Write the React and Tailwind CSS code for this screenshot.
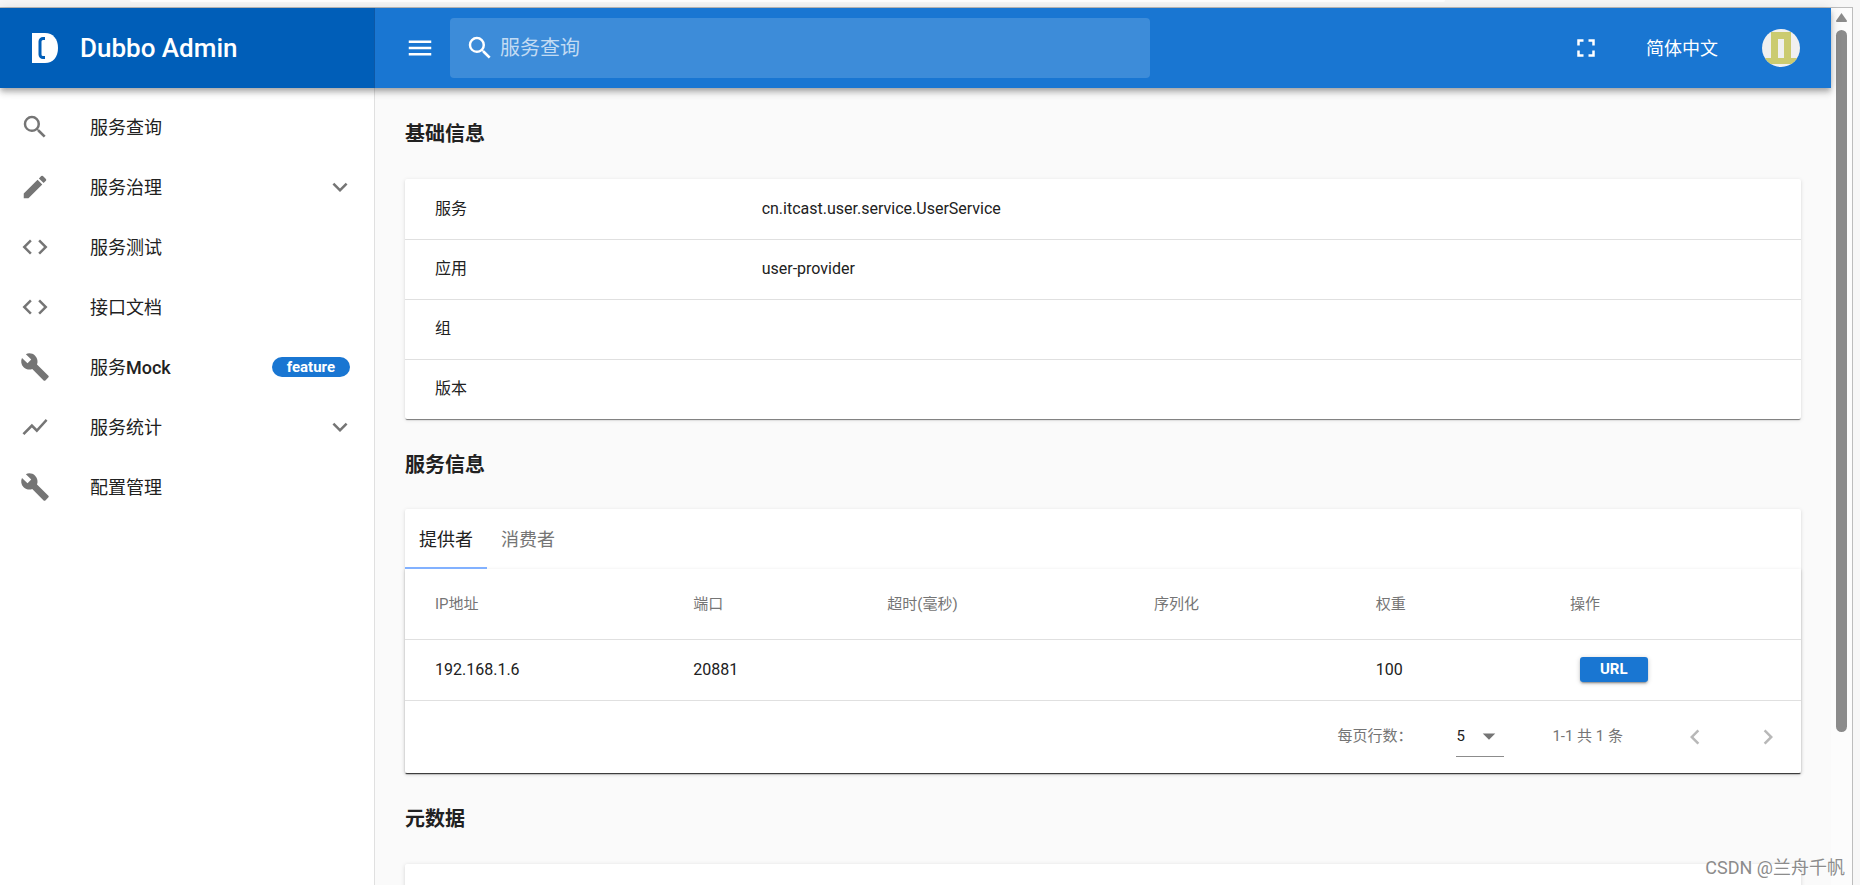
import React, { useState } from 'react';
import {
  MdBuild,
  MdChevronLeft,
  MdChevronRight,
  MdCode,
  MdEdit,
  MdFullscreen,
  MdKeyboardArrowDown,
  MdMenu,
  MdSearch,
  MdShowChart,
  MdArrowDropDown,
} from 'react-icons/md';

const menuItems = [
  { title: '服务查询', icon: MdSearch },
  { title: '服务治理', icon: MdEdit, group: true },
  { title: '服务测试', icon: MdCode },
  { title: '接口文档', icon: MdCode },
  { title: '服务', suffix: 'Mock', icon: MdBuild, badge: 'feature' },
  { title: '服务统计', icon: MdShowChart, group: true },
  { title: '配置管理', icon: MdBuild },
];

const basicInfo = [
  { name: '服务', value: 'cn.itcast.user.service.UserService' },
  { name: '应用', value: 'user-provider' },
  { name: '组', value: '' },
  { name: '版本', value: '' },
];

const columns = [
  { title: 'IP地址', width: 'w-[18.5%]' },
  { title: '端口', width: 'w-[13.9%]' },
  { title: '超时(毫秒)', width: 'w-[19.1%]' },
  { title: '序列化', width: 'w-[15.9%]' },
  { title: '权重', width: 'w-[13.9%]' },
  { title: '操作', width: 'w-[18.7%]' },
];

const providers = [
  { ip: '192.168.1.6', port: '20881', timeout: '', serialization: '', weight: '100' },
];

const Logo = () => (
  <svg className="w-[26px] h-[30px]" viewBox="0 0 26 30" fill="none">
    <path d="M0 0h13c8 0 13 6 13 15s-5 15-13 15H0z" fill="#fff" />
    <path d="M13 5.500h-2a3 3 0 0 0-3 3v13a3 3 0 0 0 3 3h2" stroke="#005eb8" strokeWidth="3" />
  </svg>
);

const Identicon = () => (
  <svg className="w-[38px] h-[38px] rounded-full" viewBox="0 0 38 38">
    <rect width="38" height="38" fill="#f0f0f0" />
    <path d="M9 3h20v26h9v6H0v-6h9zM16 10v19h6V10z" fill="#cbcb70" fillRule="evenodd" />
  </svg>
);

const Sidebar = () => (
  <nav className="w-[375px] shrink-0 bg-white border-r border-[#e0e0e0] py-[9px]">
    {menuItems.map(({ title, suffix, icon: Icon, group, badge }) => (
      <a key={title} href="#" className="flex items-center h-[60px] pl-5 pr-[19px] text-[18px] text-[#212121]">
        <Icon className="w-[30px] h-[30px] mr-10 text-[#757575]" />
        <span className="flex-1">
          {title}
          {suffix && <span className="font-medium">{suffix}</span>}
        </span>
        {badge && (
          <span className="mr-[5px] h-5 px-[15px] rounded-[10px] bg-[#1976d2] text-white text-[15px] leading-5 font-bold">
            {badge}
          </span>
        )}
        {group && <MdKeyboardArrowDown className="w-[30px] h-[30px] text-[#757575]" />}
      </a>
    ))}
  </nav>
);

const Toolbar = () => (
  <header className="relative z-10 flex h-20 shrink-0 bg-[#1976d2] text-white shadow-[0_3px_5px_-1px_rgba(0,0,0,0.2),0_5px_6px_0_rgba(0,0,0,0.14),0_1px_12px_0_rgba(0,0,0,0.12)]">
    <div className="flex items-center w-[375px] shrink-0 pl-8 gap-[22px] bg-[#005eb8] border-r border-[#0d58a6]">
      <Logo />
      <span className="text-[26px] font-medium">Dubbo Admin</span>
    </div>
    <div className="flex flex-1 items-center pl-[30px] pr-[31px]">
      <button aria-label="菜单" className="mr-[15px]">
        <MdMenu className="w-[30px] h-[30px]" />
      </button>
      <label className="flex items-center w-[700px] h-[60px] pl-[15px] gap-[5px] rounded-sm bg-white/16">
        <MdSearch className="w-[30px] h-[30px]" />
        <input
          type="text"
          aria-label="服务查询"
          placeholder="服务查询"
          className="flex-1 h-full text-[20px] outline-none placeholder:text-white/70"
        />
      </label>
      <div className="flex items-center ml-auto">
        <button aria-label="全屏" className="mr-[45px]">
          <MdFullscreen className="w-[30px] h-[30px]" />
        </button>
        <button className="mr-11 text-[18px]">简体中文</button>
        <button aria-label="用户">
          <Identicon />
        </button>
      </div>
    </div>
  </header>
);

const SectionTitle = ({ children }) => (
  <h3 className="h-[30px] text-[20px] leading-8 font-bold">{children}</h3>
);

const BasicInfo = () => (
  <div className="mt-[31px] mb-[30px] rounded-[2px] bg-white shadow-[0_2px_1px_-1px_rgba(0,0,0,0.4),0_1px_1px_0_rgba(0,0,0,0.14),0_1px_4px_0_rgba(0,0,0,0.12)]">
    <table className="w-full table-fixed text-[16px]">
      <tbody>
        {basicInfo.map((item) => (
          <tr key={item.name} className="h-[60px] border-b border-[#e0e0e0] last:border-0">
            <th scope="row" className="w-[23.4%] pl-[30px] text-left font-normal">{item.name}</th>
            <td className="pl-[30px]">{item.value}</td>
          </tr>
        ))}
      </tbody>
    </table>
  </div>
);

const ServiceInfo = () => {
  const [tab, setTab] = useState('提供者');

  return (
    <div className="mt-[30px] mb-[30px] rounded-[2px] bg-white shadow-[0_2px_1px_-1px_rgba(0,0,0,0.4),0_1px_1px_0_rgba(0,0,0,0.14),0_1px_4px_0_rgba(0,0,0,0.12)]">
      <div role="tablist" className="flex h-[60px]">
        {['提供者', '消费者'].map((name) => (
          <button
            key={name}
            role="tab"
            aria-selected={tab === name}
            onClick={() => setTab(name)}
            className={`px-[14px] pt-[2px] border-b-2 text-[18px] ${
              tab === name ? 'border-[#82b1ff] text-[#212121]' : 'border-transparent text-[#757575]'
            }`}
          >
            {name}
          </button>
        ))}
      </div>
      <div className="shadow-[0_2px_1px_-1px_rgba(0,0,0,0.4),0_1px_1px_0_rgba(0,0,0,0.14),0_1px_4px_0_rgba(0,0,0,0.12)]">
        <table className="w-full table-fixed text-left text-[16px]">
          <thead>
            <tr className="h-[70px] border-b border-[#e0e0e0] text-[15px] text-[#757575]">
              {columns.map((column) => (
                <th key={column.title} scope="col" className={`pl-[30px] font-normal ${column.width}`}>
                  {column.title}
                </th>
              ))}
            </tr>
          </thead>
          <tbody>
            {providers.map((row) => (
              <tr key={row.ip} className="h-[61px] border-b border-[#e0e0e0]">
                <td className="pl-[30px]">{row.ip}</td>
                <td className="pl-[30px]">{row.port}</td>
                <td className="pl-[30px]">{row.timeout}</td>
                <td className="pl-[30px]">{row.serialization}</td>
                <td className="pl-[30px]">{row.weight}</td>
                <td className="pl-10">
                  <button className="block h-[25px] px-5 rounded-[3px] bg-[#1976d2] text-white text-[15px] font-bold shadow-[0_3px_1px_-2px_rgba(0,0,0,0.2),0_2px_2px_0_rgba(0,0,0,0.14),0_1px_5px_0_rgba(0,0,0,0.2)]">
                    URL
                  </button>
                </td>
              </tr>
            ))}
          </tbody>
        </table>

        {/* Pagination */}
        <div className="flex items-center justify-end h-[72px] pr-[18px] text-[15px] text-[#757575]">
          <label htmlFor="rows">每页行数：</label>
          <div className="flex items-center ml-11 mr-12 w-12 h-10 border-b border-[#8c8c8c]">
            <select id="rows" className="appearance-none w-[18px] text-[#212121] outline-none">
              <option>5</option>
            </select>
            <MdArrowDropDown className="w-[30px] h-[30px]" />
          </div>
          <span>1-1 共 1 条</span>
          <button aria-label="上一页" className="ml-[57px] text-[#b8b8b8]" disabled>
            <MdChevronLeft className="w-[30px] h-[30px]" />
          </button>
          <button aria-label="下一页" className="ml-[43px] text-[#b8b8b8]" disabled>
            <MdChevronRight className="w-[30px] h-[30px]" />
          </button>
        </div>
      </div>
    </div>
  );
};

const App = () => {
  return (
    <div className="relative flex flex-col h-screen overflow-hidden bg-[#f7f7f7] text-[#212121] font-['Roboto','Noto_Sans_CJK_SC',sans-serif]">
      {/* Bottom edge of the browser's address bar */}
      <div className="h-[7px] shrink-0 pl-[130px] pr-[415px]">
        <div className="h-[2px] rounded-b-full bg-white" />
      </div>

      <div className="flex flex-1 min-h-0 mr-[7px] border-t border-r border-[#bdbdbd] bg-[#fafafa]">
        <div className="flex flex-col flex-1 min-w-0">
          <Toolbar />
          <div className="flex flex-1 min-h-0">
            <Sidebar />
            <main className="flex-1 min-w-0 overflow-hidden px-[30px] pt-[30px]">
              <SectionTitle>基础信息</SectionTitle>
              <BasicInfo />
              <SectionTitle>服务信息</SectionTitle>
              <ServiceInfo />
              <SectionTitle>元数据</SectionTitle>
              <div className="mt-[31px] h-[120px] rounded-[2px] bg-white shadow-[0_1px_4px_0_rgba(0,0,0,0.15)]" />
            </main>
          </div>
        </div>

        {/* Scrollbar */}
        <div className="flex flex-col items-center w-[21px] shrink-0 bg-[#fcfcfc]">
          <svg className="h-[22px] w-[11px] shrink-0" viewBox="0 0 11 22">
            <path d="M5.500 5 10.800 12.500a1 1 0 0 1-.8 1.500H1a1 1 0 0 1-.8-1.500z" fill="#8b8b8b" />
          </svg>
          <div className="w-[11px] h-[80%] rounded-full bg-[#8b8b8b]" />
        </div>
      </div>

      <span className="absolute right-[15px] bottom-1 text-[18px] text-[#8c8c8c] [text-shadow:1px_1px_0_#fff]">
        CSDN @兰舟千帆
      </span>
    </div>
  );
};

export default App;
